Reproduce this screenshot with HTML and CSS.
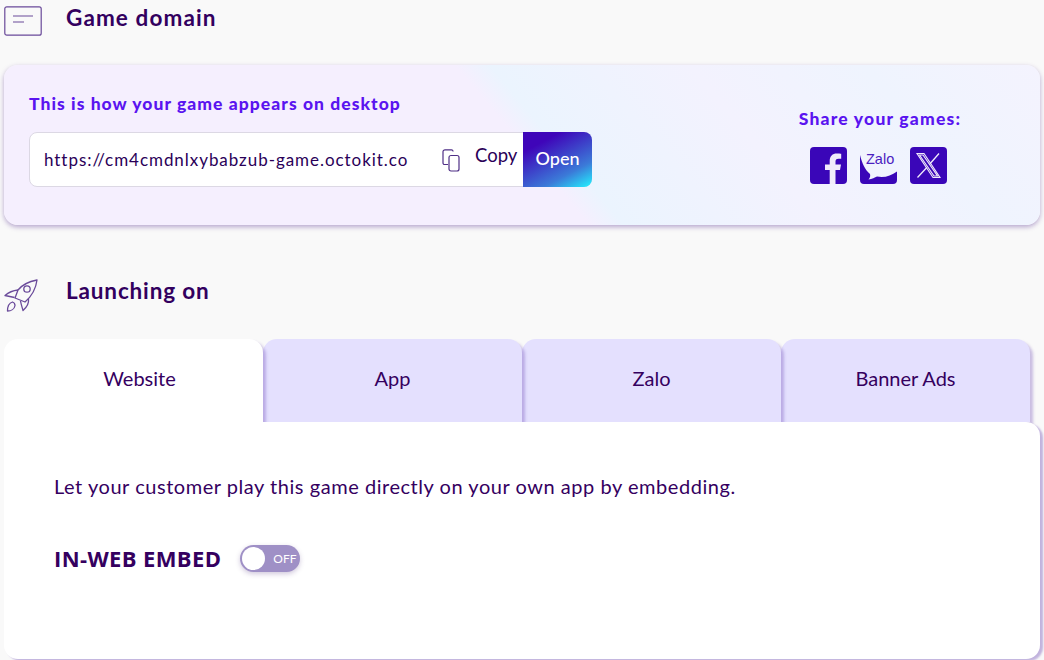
FILE: index.html
```html
<!DOCTYPE html>
<html lang="en">
<head>
<meta charset="utf-8">
<title>Game domain</title>
<link rel="stylesheet" href="styles.css">
</head>
<body>
<div class="page">
  <header class="section-head head-domain">
    <svg class="head-icon" width="38" height="30" viewBox="0 0 38 30" fill="none" stroke="#6a4a9a" stroke-width="1.2">
      <rect x="0.8" y="0.8" width="36.4" height="28.4" rx="2"/>
      <path d="M9 10H29M9 16H20"/>
    </svg>
    <h2 class="section-title">Game domain</h2>
  </header>

  <section class="domain-card">
    <div class="domain-left">
      <h3 class="accent-title">This is how your game appears on desktop</h3>
      <div class="url-box">
        <span class="url-text">https://cm4cmdnlxybabzub-game.octokit.co</span>
        <svg class="copy-icon" width="18" height="23" viewBox="0 0 18 23" fill="none" stroke="#4f2f86" stroke-width="1.2">
          <path d="M11 2.500V2A1.500 1.500 0 0 0 9.500 .8H3A2 2 0 0 0 1 2.800V14A1.500 1.500 0 0 0 2.500 15.500H6"/>
          <rect x="7" y="6.500" width="10" height="15.500" rx="2"/>
        </svg>
        <span class="copy-label">Copy</span>
        <button class="open-btn">Open</button>
      </div>
    </div>
    <div class="share">
      <h3 class="accent-title">Share your games:</h3>
      <div class="share-icons">
        <svg width="37" height="37" viewBox="0 0 37 37">
          <rect width="37" height="37" rx="4" fill="#3a06b8"/>
          <path fill="#f1ecfb" d="M25.500 37V23H30L31 17.500H25.500V14.500C25.500 12.800 26.200 11.700 28.500 11.700H31.200V6.800C30.200 6.600 28.500 6.400 26.800 6.400C22.500 6.400 19.700 9 19.700 13.800V17.500H15V23H19.700V37Z"/>
        </svg>
        <div class="zalo">
          <span class="zalo-text">Zalo</span>
          <svg class="zalo-shape" width="37" height="37" viewBox="0 0 37 37">
            <path fill="#3a06b8" d="M0 8C2 16 5 23 10 27C10.500 29 10 31 8.500 32.500C12 32 15 30.500 17 29.500C24 31 31 29 37 24.500V33A4 4 0 0 1 33 37H4A4 4 0 0 1 0 33Z"/>
          </svg>
        </div>
        <svg width="37" height="37" viewBox="0 0 37 37">
          <rect width="37" height="37" rx="4" fill="#3a06b8"/>
          <path fill="none" stroke="#f1ecfb" stroke-width="1.100" d="M7 6.500H14L30 30.500H23ZM9.500 8 24 29H27.500L13 8Z"/>
          <path fill="none" stroke="#f1ecfb" stroke-width="1.300" d="M29 6.500 19.800 17M16.800 20.500 7.500 30.500"/>
        </svg>
      </div>
    </div>
  </section>

  <header class="section-head head-launch">
    <svg class="head-icon rocket" width="38" height="36" viewBox="0 0 38 36" fill="none" stroke="#6a4a9a" stroke-width="1.300" stroke-linejoin="round">
      <path d="M33 2C25 3.500 18 7 14 12L11 20L21 24C28 18 32 10 33 2Z"/>
      <circle cx="23" cy="11" r="3.200"/>
      <path d="M14 12C9 12.500 5 14 1 17.500L10.500 19.500"/>
      <path d="M24.500 21C25 25 23 29 19 32.500C18 29 17 26 16.500 23"/>
      <path d="M8.500 24C5 25 3.500 28 3.500 33C7 33 10.500 31 11 27.500C11 26 10 24.500 8.500 24Z"/>
    </svg>
    <h2 class="section-title">Launching on</h2>
  </header>

  <nav class="tabs">
    <div class="tab tab-active tab-website">Website</div>
    <div class="tab tab-app">App</div>
    <div class="tab tab-zalo">Zalo</div>
    <div class="tab tab-banner">Banner Ads</div>
  </nav>

  <section class="panel">
    <p class="panel-text">Let your customer play this game directly on your own app by embedding.</p>
    <div class="embed-row">
      <span class="embed-label">IN-WEB EMBED</span>
      <div class="toggle">
        <span class="toggle-knob"></span>
        <span class="toggle-text">OFF</span>
      </div>
    </div>
  </section>
</div>
</body>
</html>
```
FILE: styles.css
```css
* { box-sizing: border-box; }
html, body { margin: 0; padding: 0; }
body {
  width: 1044px;
  height: 660px;
  overflow: hidden;
  background: #f9f9f9;
  color: #35005f;
  font-family: "Lato", "Liberation Sans", sans-serif;
}
.page { padding-left: 4px; width: 1040px; }
.section-head { display: flex; align-items: center; gap: 24px; }
.head-domain { height: 65px; align-items: flex-start; padding-top: 6px; }
.head-launch { height: 114px; padding: 36px 0 18px; }
.head-icon { flex: none; }
.rocket { margin-top: 10px; }
.section-title {
  margin: 0;
  font-size: 22.500px;
  font-weight: 700;
  letter-spacing: 0.85px;
  line-height: 26px;
  color: #33005f;
}
.head-domain .section-title { margin-top: -1px; letter-spacing: 1.1px; }
.domain-card {
  height: 160px;
  border-radius: 14px;
  display: flex;
  justify-content: space-between;
  padding: 28px 0 0 25px;
  background: linear-gradient(50deg, #f5effe 0%, #f5effe 50%, #ebf4fe 53%, #f3f2fe 70%, #eff4fe 85%, #f4f3fe 100%);
  box-shadow: 0 2px 5px rgba(80, 40, 140, 0.4);
}
.accent-title {
  margin: 0;
  font-size: 17.500px;
  font-weight: 900;
  letter-spacing: 1.05px;
  line-height: 22px;
  color: #5a14f0;
}
.url-box {
  margin-top: 17px;
  width: 563px;
  height: 55px;
  display: flex;
  align-items: center;
  background: #fff;
  border: 1px solid #dcd8e4;
  border-radius: 8px;
  padding-left: 14px;
}
.url-text { font-size: 17px; letter-spacing: 0.95px; width: 398px; white-space: nowrap; color: #2a0058; }
.copy-icon { flex: none; margin-top: 1px; }
.copy-label { font-size: 18.500px; margin-left: 15px; width: 48px; margin-top: -9px; color: #2a0058; }
.open-btn {
  flex: none;
  width: 69px;
  height: 55px;
  margin: -1px -1px -1px 0;
  padding: 0 0 4px;
  border: 0;
  border-radius: 0 8px 8px 0;
  color: #fff;
  font-family: inherit;
  font-size: 18px;
  font-weight: 500;
  background: linear-gradient(152deg, #3f05b9 0%, #3f05b9 22%, #3b7ad8 72%, #22f3ff 100%);
}
.share { width: 164px; margin-right: 78px; margin-top: 15px; }
.share .accent-title { white-space: nowrap; text-align: center; letter-spacing: 1.2px; }
.share-icons { display: flex; gap: 13px; margin-top: 17px; margin-left: 12px; }
.zalo { position: relative; width: 37px; height: 37px; }
.zalo-shape { display: block; }
.zalo-text {
  position: absolute;
  top: 4px;
  left: 6px;
  font-size: 14.500px;
  line-height: 17px;
  color: #4a20c0;
  font-family: "Liberation Sans", sans-serif;
}
.tabs { display: flex; height: 83px; }
.tab {
  height: 83px;
  width: 259px;
  border-radius: 14px 14px 0 0;
  background: #e4e0fe;
  display: flex;
  align-items: center;
  justify-content: center;
  padding-bottom: 5px;
  font-size: 20px;
  box-shadow: 3px 3px 3px rgba(90, 50, 170, 0.3);
  color: #35005f;
}
.tab-active { background: #fff; padding-left: 12px; position: relative; z-index: 4; }
.tab-app { position: relative; z-index: 3; }
.tab-zalo { position: relative; z-index: 2; }
.tab-banner { width: 249px; position: relative; z-index: 1; }
.panel {
  position: relative;
  z-index: 5;
  height: 237px;
  background: #fff;
  border-radius: 0 14px 14px 14px;
  padding: 52px 0 0 50px;
  box-shadow: 3px 2px 2px rgba(90, 50, 170, 0.35);
}
.panel-text { margin: 0; font-size: 20px; letter-spacing: 0.54px; line-height: 24px; color: #35005f; }
.embed-row { display: flex; align-items: center; margin-top: 45px; gap: 19px; }
.embed-label {
  font-family: "Open Sans", sans-serif;
  font-size: 22px;
  font-weight: 700;
  letter-spacing: 0.38px;
  line-height: 28px;
  color: #35005f;
}
.toggle {
  position: relative;
  width: 60px;
  height: 27px;
  margin-top: 2px;
  border-radius: 14px;
  background: #9f90c6;
  box-shadow: 0 2px 5px rgba(70, 40, 120, 0.25);
}
.toggle-knob {
  position: absolute;
  left: 2px;
  top: 2px;
  width: 23px;
  height: 23px;
  border-radius: 50%;
  background: #fff;
}
.toggle-text {
  position: absolute;
  left: 33px;
  top: 6px;
  color: #fff;
  font-size: 12px;
  line-height: 15px;
}
```
